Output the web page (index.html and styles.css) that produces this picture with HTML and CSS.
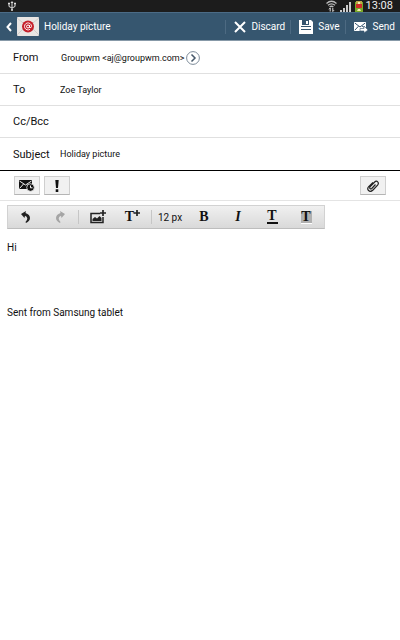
FILE: index.html
```html
<!DOCTYPE html>
<html lang="en">
<head>
    <meta charset="UTF-8">
    <meta name="viewport" content="width=device-width, initial-scale=1.0">
    <title>Holiday picture</title>
    <link rel="stylesheet" href="styles.css">
</head>
<body>
    <div class="status-bar">
        <svg class="usb" width="8" height="10" viewBox="0 0 8 10" fill="none" stroke="#ddd">
            <path d="M4 1v8M1 3v2.500l3 1.500l3-1.500V3"/>
            <path d="M2.500 2L4 0l1.500 2z" fill="#ddd" stroke="none"/>
            <circle cx="4" cy="9" r="1" fill="#ddd" stroke="none"/>
            <path d="M0 2.500h2M6 2.500h2" stroke-width="1.500"/>
        </svg>
        <div class="status-icons">
            <svg width="11" height="12" viewBox="0 0 11 12" fill="none" stroke="#bbb" stroke-width="1.300">
                <path d="M.5 3.500Q5.500-1 10.500 3.500M2 5.300Q5.500 2.300 9 5.300M3.600 7Q5.500 5.500 7.400 7"/>
                <path d="M4.200 8v3.500M3 9.300L4.200 8M6.800 8v3.500M8 10.200L6.800 11.500" stroke="#ddd" stroke-width="1"/>
            </svg>
            <svg width="12" height="11" viewBox="0 0 12 11" fill="#ccc">
                <path d="M0 9h2v2H0zM3 7h2v4H3zM6 4h2v7H6zM9 1h2v10H9z"/>
            </svg>
            <svg width="8" height="11" viewBox="0 0 8 11">
                <path d="M0 1h8v10H0z" fill="#79a928"/>
                <path d="M1 0h6v3H1z" fill="#b9a94a"/>
                <path d="M1 3h6v4H1z" fill="#d02c28"/>
                <path d="M3 1h2v2H3zM3 8h2l1 2H2z" fill="#f5e9b0"/>
            </svg>
            <span class="clock">13:08</span>
        </div>
    </div>

    <header class="action-bar">
        <button class="back" aria-label="Back">
            <svg width="6" height="10" viewBox="0 0 6 10" fill="none" stroke="#fff" stroke-width="2"><path d="M5 1L1.500 5L5 9"/></svg>
            <svg width="22" height="19" viewBox="0 0 22 19">
                <rect width="22" height="19" rx="1" fill="#e9e6e4"/>
                <path d="M0 1l11 9L22 1M0 18l8-8M22 18l-8-8" fill="none" stroke="#d2cecb"/>
                <circle cx="11" cy="9.500" r="6" fill="#c5202b"/>
                <circle cx="11" cy="9.500" r="1.500" fill="none" stroke="#fff"/>
                <path d="M12.500 8v2.500q2 .8 2-1.200a3.500 3.500 0 1 0-1.500 3" fill="none" stroke="#fff" stroke-width=".9"/>
            </svg>
        </button>
        <h1 class="title">Holiday picture</h1>
        <button class="action">
            <svg width="12" height="12" viewBox="0 0 12 12" stroke="#fff" stroke-width="2"><path d="M1 1l10 10M11 1L1 11"/></svg>
            Discard
        </button>
        <button class="action">
            <svg width="14" height="14" viewBox="0 0 14 14">
                <path d="M0 0h12l2 2v12H0z" fill="#fff"/>
                <path d="M3 0h7v5H3z" fill="#35546f"/>
                <path d="M7 1h2v3H7z" fill="#fff"/>
                <path d="M2 6h10v1H2zM2 9h10v1H2z" fill="#35546f"/>
            </svg>
            Save
        </button>
        <button class="action">
            <svg width="14" height="12" viewBox="0 0 14 12">
                <path d="M0 1h12v9H0z" fill="#fff"/>
                <path d="M.8 2L6 6l5.200-4M.8 9.200l3.700-4M11 7L8 5" fill="none" stroke="#35546f"/>
                <path d="M6 7.500h4V5l4 4l-4 3v-2H6z" fill="#fff" stroke="#35546f" stroke-width=".6"/>
            </svg>
            Send
        </button>
    </header>

    <form class="fields">
        <div class="row">
            <span class="label">From</span>
            <span class="from">Groupwm &lt;aj@groupwm.com&gt;</span>
            <button type="button" class="choose" aria-label="Choose account">
                <svg width="14" height="14" viewBox="0 0 14 14" fill="none">
                    <circle cx="7" cy="7" r="6.400" stroke="#7d8b99"/>
                    <path d="M5.500 3.500L9 7l-3.500 3.500" stroke="#46586a" stroke-width="1.500"/>
                </svg>
            </button>
        </div>
        <div class="row">
            <label class="label" for="to">To</label>
            <input type="text" id="to" value="Zoe Taylor">
        </div>
        <div class="row">
            <label class="label" for="cc">Cc/Bcc</label>
            <input type="text" id="cc">
        </div>
        <div class="row">
            <label class="label" for="subject">Subject</label>
            <input type="text" id="subject" value="Holiday picture">
        </div>
    </form>

    <div class="options">
        <button class="option" aria-label="Schedule sending">
            <svg width="16" height="13" viewBox="0 0 16 13">
                <path d="M0 1h13v9H0z" fill="#111"/>
                <path d="M.5 2l6 4l6-4M.5 9.500l4-4.500M9 5.500l2 2" fill="none" stroke="#eee"/>
                <circle cx="11.500" cy="8.500" r="3.800" fill="#111" stroke="#eee" stroke-width=".8"/>
                <path d="M11.500 6.500v2.300H13.500" fill="none" stroke="#fff"/>
            </svg>
        </button>
        <button class="option" aria-label="Priority">
            <svg width="4" height="12" viewBox="0 0 4 12" fill="#111"><path d="M.3 0h3.400L3 8H1zM.7 9.300h2.600V12H.7z"/></svg>
        </button>
        <button class="option attach" aria-label="Attach">
            <svg width="12" height="12" viewBox="0 0 12 12" fill="none" stroke="#222" stroke-width="1.200">
                <path d="M8.500 4.500L4.800 8.500Q3.700 9.300 3 8.500T3.200 6.700L7.700 2Q9.300.4 10.700 1.800T10.600 5.200L6 10Q3.400 12.400 1.600 10.500T1.700 6.700L6 2.300"/>
            </svg>
        </button>
    </div>

    <div class="format-bar">
        <button class="tool" aria-label="Undo">
            <svg width="10" height="12" viewBox="0 0 10 12"><path d="M0 3L5 0L4.500 2Q9 3.500 9 7Q9 10 5 12L4.500 11Q6.500 9 6.300 7.200Q6 5.500 4 4.800L3.500 7z" fill="#222"/></svg>
        </button>
        <button class="tool" aria-label="Redo">
            <svg width="10" height="12" viewBox="0 0 10 12"><path d="M10 3L5 0L5.500 2Q1 3.500 1 7Q1 10 5 12L5.500 11Q3.500 9 3.700 7.200Q4 5.500 6 4.800L6.500 7z" fill="#a5a5a5"/></svg>
        </button>
        <span class="sep"></span>
        <button class="tool insert" aria-label="Insert picture">
            <svg width="16" height="14" viewBox="0 0 16 14">
                <path d="M10 3.500H1v9h12V7" fill="none" stroke="#222" stroke-width="1.500"/>
                <path d="M2.500 11V9l2.500-2l2 1.500L9.500 6L11.500 8v3z" fill="#222"/>
                <path d="M13 0v6M10 3h6" stroke="#222" stroke-width="1.700"/>
            </svg>
        </button>
        <button class="tool insert serif" aria-label="Insert text">T<svg class="plus" width="6" height="6" viewBox="0 0 6 6"><path d="M3 0v6M0 3h6" stroke="#222" stroke-width="1.700"/></svg></button>
        <span class="sep"></span>
        <select class="tool size" aria-label="Font size">
            <option>12 px</option>
        </select>
        <button class="tool serif" aria-label="Bold">B</button>
        <button class="tool serif italic" aria-label="Italic">I</button>
        <button class="tool serif" aria-label="Text colour"><span class="underlined">T</span></button>
        <button class="tool serif" aria-label="Highlight"><span class="highlight">T</span></button>
    </div>

    <textarea class="message" rows="10" aria-label="Message">Hi




Sent from Samsung tablet</textarea>
</body>
</html>
```
FILE: styles.css
```css
* {
    box-sizing: border-box;
}

body {
    margin: 0;
    min-height: 100vh;
    display: flex;
    flex-direction: column;
    background-color: #fff;
    color: #111;
    font-family: Roboto, "Liberation Sans", sans-serif;
    font-size: 11px;
}

button, input, select, textarea {
    margin: 0;
    padding: 0;
    border: none;
    background: none;
    color: inherit;
    font: inherit;
}

svg {
    display: block;
    flex: none;
}

.status-bar {
    display: flex;
    justify-content: space-between;
    align-items: center;
    height: 12px;
    padding: 0 7px 0 8px;
    background-color: #1c1c1c;
    color: #eee;
}

.status-icons {
    display: flex;
    align-items: center;
    gap: 3px;
}

.clock {
    font-size: 11px;
    line-height: 12px;
}

.action-bar {
    display: flex;
    align-items: center;
    height: 29px;
    padding-left: 6px;
    background-color: #36566f;
    border-top: 1px solid #4b6b86;
    border-bottom: 1px solid #8799a8;
    color: #fff;
}

.back {
    display: flex;
    align-items: center;
    gap: 5px;
}

.title {
    flex: 1;
    margin: 0 0 0 5px;
    font-size: 10px;
    font-weight: normal;
}

.action {
    display: flex;
    align-items: center;
    gap: 5px;
    height: 14px;
    padding: 0 5px 0 8px;
    border-left: 1px solid #4d6a82;
    font-size: 10px;
}

.fields {
    padding-top: 1px;
    border-bottom: 1px solid #000;
}

.row {
    display: flex;
    align-items: center;
    height: 32px;
    padding: 0 13px;
    border-bottom: 1px solid #e0e0e0;
}

.row:last-child {
    border-bottom: none;
}

.label {
    width: 47px;
}

.row input {
    flex: 1;
    min-width: 0;
    font-size: 9px;
    outline: none;
}

.from {
    padding-left: 1px;
    font-size: 9px;
}

.choose {
    margin-left: 2px;
}

.options {
    display: flex;
    align-items: center;
    gap: 4px;
    height: 30px;
    padding: 0 14px;
    border-bottom: 1px solid #e4e4e4;
}

.option {
    display: flex;
    justify-content: center;
    align-items: center;
    width: 26px;
    height: 19px;
    background-color: #f1f1f1;
    border: 1px solid #cfcfcf;
    border-bottom-color: #b5b5b5;
}

.attach {
    margin-left: auto;
}

.format-bar {
    display: flex;
    align-items: center;
    align-self: flex-start;
    height: 24px;
    margin: 4px 7px 0;
    padding: 0 1px;
    background: linear-gradient(#f0f0f0, #d9d9d9);
    border: 1px solid #d2d2d2;
    border-bottom-color: #bdbdbd;
}

.tool {
    display: flex;
    justify-content: center;
    align-items: center;
    width: 34px;
    height: 22px;
}

.insert {
    width: 35px;
}

.sep {
    width: 1px;
    height: 14px;
    margin: 0 1px;
    background-color: #c6c6c6;
}

.size {
    appearance: none;
    text-align: center;
    font-size: 10px;
}

.serif {
    font-family: "Liberation Serif", serif;
    font-size: 14px;
    font-weight: bold;
}

.italic {
    font-style: italic;
}

.plus {
    margin-bottom: 8px;
}

.underlined, .highlight {
    width: 11px;
    line-height: 12px;
}

.underlined {
    border-bottom: 2px solid #111;
}

.highlight {
    background-color: #b0b0b0;
    border-bottom: 1px solid #fff;
}

.message {
    flex: 1;
    width: 100%;
    padding: 12px 7px;
    font-size: 10px;
    line-height: 13px;
    resize: none;
    outline: none;
}
```
